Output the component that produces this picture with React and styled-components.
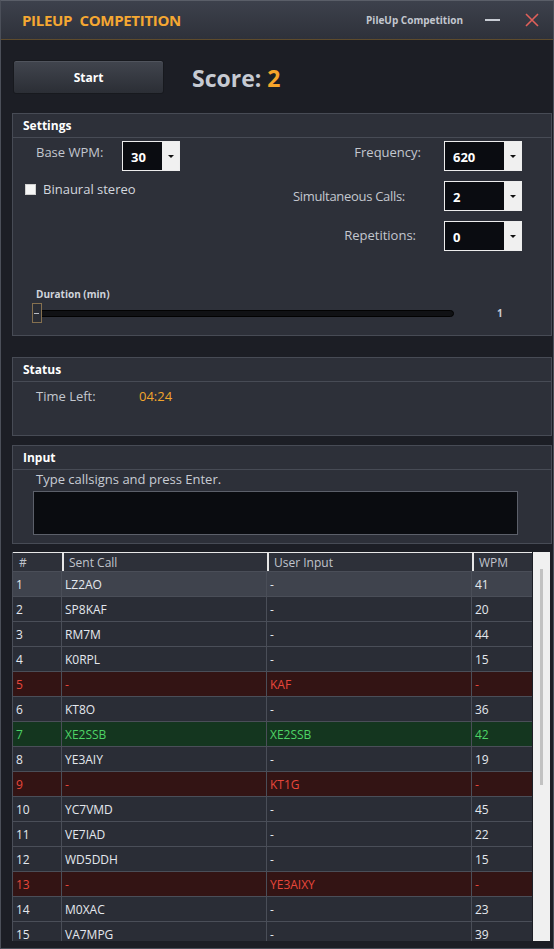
import styled, { createGlobalStyle } from "styled-components";

const GlobalStyle = createGlobalStyle`
  html, body {
    margin: 0;
    padding: 0;
    background: #1c1e25;
  }
  * {
    box-sizing: border-box;
  }
`;

const rows = [
  { n: 1, sent: "LZ2AO", input: "-", wpm: "41", kind: "selected" },
  { n: 2, sent: "SP8KAF", input: "-", wpm: "20" },
  { n: 3, sent: "RM7M", input: "-", wpm: "44" },
  { n: 4, sent: "K0RPL", input: "-", wpm: "15" },
  { n: 5, sent: "-", input: "KAF", wpm: "-", kind: "wrong" },
  { n: 6, sent: "KT8O", input: "-", wpm: "36" },
  { n: 7, sent: "XE2SSB", input: "XE2SSB", wpm: "42", kind: "ok" },
  { n: 8, sent: "YE3AIY", input: "-", wpm: "19" },
  { n: 9, sent: "-", input: "KT1G", wpm: "-", kind: "wrong" },
  { n: 10, sent: "YC7VMD", input: "-", wpm: "45" },
  { n: 11, sent: "VE7IAD", input: "-", wpm: "22" },
  { n: 12, sent: "WD5DDH", input: "-", wpm: "15" },
  { n: 13, sent: "-", input: "YE3AIXY", wpm: "-", kind: "wrong" },
  { n: 14, sent: "M0XAC", input: "-", wpm: "23" },
  { n: 15, sent: "VA7MPG", input: "-", wpm: "39" },
];

const rowBg = {
  selected: "#3f434d",
  wrong: "#331414",
  ok: "#14361f",
};
const rowFg = {
  wrong: "#e8473b",
  ok: "#4ed466",
};

export default function App() {
  return (
    <>
      <GlobalStyle />
      <Window>
        <TitleBar>
          <AppTitle>PILEUP  COMPETITION</AppTitle>
          <Caption>PileUp Competition</Caption>
          <MinButton />
          <CloseButton>
            <svg width="14" height="14" viewBox="0 0 14 14">
              <path d="M1 1 L13 13 M13 1 L1 13" stroke="#e0605a" strokeWidth="1.6" />
            </svg>
          </CloseButton>
        </TitleBar>

        <Main>
          <Toolbar>
            <StartButton>Start</StartButton>
            <Score>
              Score: <ScoreValue>2</ScoreValue>
            </Score>
          </Toolbar>

          <GroupBox $height={223} $mt={19}>
            <GroupHeader>Settings</GroupHeader>
            <SettingsTop>
              <LeftCol>
                <FieldRow>
                  <Label $width={98} $indent={12} $raise={8}>Base WPM:</Label>
                  <Combo $width={58}>
                    <ComboText>30</ComboText>
                    <ComboButton />
                  </Combo>
                </FieldRow>
                <CheckRow>
                  <CheckBox />
                  <CheckLabel>Binaural stereo</CheckLabel>
                </CheckRow>
              </LeftCol>
              <RightCol>
                <FieldRow>
                  <Label $gap={23} $raise={8}>Frequency:</Label>
                  <Combo $width={78}>
                    <ComboText>620</ComboText>
                    <ComboButton />
                  </Combo>
                </FieldRow>
                <FieldRow>
                  <Label $gap={39} $tight>Simultaneous Calls:</Label>
                  <Combo $width={78}>
                    <ComboText>2</ComboText>
                    <ComboButton />
                  </Combo>
                </FieldRow>
                <FieldRow>
                  <Label $gap={28} $raise={2}>Repetitions:</Label>
                  <Combo $width={78}>
                    <ComboText>0</ComboText>
                    <ComboButton />
                  </Combo>
                </FieldRow>
              </RightCol>
            </SettingsTop>
            <DurationLabel>Duration (min)</DurationLabel>
            <SliderRow>
              <SliderTrack>
                <SliderRail />
                <SliderThumb />
              </SliderTrack>
              <SliderValue>1</SliderValue>
            </SliderRow>
          </GroupBox>

          <GroupBox $height={79} $mt={21}>
            <GroupHeader>Status</GroupHeader>
            <StatusRow>
              <StatusLabel>Time Left:</StatusLabel>
              <TimeValue>04:24</TimeValue>
            </StatusRow>
          </GroupBox>

          <GroupBox $height={99} $mt={9}>
            <GroupHeader>Input</GroupHeader>
            <Hint>Type callsigns and press Enter.</Hint>
            <CallInput />
          </GroupBox>

          <TableWrap>
            <Table>
              <HeadRow>
                <HeadCell>#</HeadCell>
                <HeadCell>Sent Call</HeadCell>
                <HeadCell>User Input</HeadCell>
                <HeadCell>WPM</HeadCell>
              </HeadRow>
              {rows.map((r) => (
                <Row key={r.n} $bg={rowBg[r.kind]} $fg={rowFg[r.kind]}>
                  <Cell>{r.n}</Cell>
                  <Cell>{r.sent}</Cell>
                  <Cell>{r.input}</Cell>
                  <Cell>{r.wpm}</Cell>
                </Row>
              ))}
            </Table>
            <ScrollBar>
              <ScrollThumb />
            </ScrollBar>
          </TableWrap>
        </Main>
      </Window>
    </>
  );
}

const font = `"Open Sans", "Noto Sans", sans-serif`;

const Window = styled.div`
  width: 554px;
  height: 949px;
  border: 1px solid #4b4f59;
  border-top-color: #5a5e68;
  background: #1c1e25;
  display: flex;
  flex-direction: column;
  overflow: hidden;
  font-family: ${font};
`;

const TitleBar = styled.div`
  height: 39px;
  flex-shrink: 0;
  display: flex;
  align-items: center;
  padding: 0 14px 0 21px;
  background: linear-gradient(#3d414c, #2e313a);
  border-bottom: 1px solid #5e4b2c;
`;

const AppTitle = styled.div`
  white-space: pre;
  font-size: 15px;
  font-weight: 700;
  color: #f5a832;
  letter-spacing: -0.3px;
  flex: 1;
`;

const Caption = styled.div`
  font-size: 10px;
  font-weight: 700;
  color: #c3c7cf;
  margin-right: 22px;
`;

const MinButton = styled.div`
  width: 15px;
  height: 2px;
  background: #c8ccd4;
  margin-right: 25px;
`;

const CloseButton = styled.div`
  width: 14px;
  height: 14px;
  display: flex;
`;

const Main = styled.div`
  flex: 1;
  min-height: 0;
  display: flex;
  flex-direction: column;
  padding: 20px 1px 7px 11px;
`;

const Toolbar = styled.div`
  height: 34px;
  display: flex;
  align-items: center;
  gap: 28px;
  padding-left: 1px;
  flex-shrink: 0;
`;

const StartButton = styled.button`
  width: 151px;
  height: 34px;
  border: 1px solid #17191e;
  border-radius: 3px;
  background: linear-gradient(#41454e, #2b2e35);
  box-shadow: inset 0 1px 0 #50545d;
  color: #ffffff;
  font-family: ${font};
  font-size: 12px;
  font-weight: 700;
  padding: 0;
`;

const Score = styled.div`
  font-size: 23px;
  font-weight: 700;
  color: #c6cad2;
  margin-top: 1px;
`;

const ScoreValue = styled.span`
  color: #f7a52b;
`;

const GroupBox = styled.div`
  height: ${(p) => p.$height}px;
  margin-top: ${(p) => p.$mt}px;
  flex-shrink: 0;
  border: 1px solid #474b55;
  background: #2d3039;
  display: flex;
  flex-direction: column;
`;

const GroupHeader = styled.div`
  height: 24px;
  flex-shrink: 0;
  display: flex;
  align-items: center;
  padding-left: 10px;
  border-bottom: 1px solid #474b55;
  color: #ffffff;
  font-size: 12px;
  font-weight: 700;
`;

const SettingsTop = styled.div`
  display: flex;
  justify-content: space-between;
  padding: 3px 29px 0 11px;
`;

const LeftCol = styled.div`
  display: flex;
  flex-direction: column;
`;

const RightCol = styled.div`
  display: flex;
  flex-direction: column;
  align-items: flex-end;
  gap: 10px;
`;

const FieldRow = styled.div`
  display: flex;
  align-items: center;
  height: 30px;
`;

const Label = styled.div`
  width: ${(p) => (p.$width ? `${p.$width}px` : "auto")};
  padding-left: ${(p) => p.$indent || 0}px;
  margin-right: ${(p) => p.$gap || 0}px;
  margin-bottom: ${(p) => p.$raise || 0}px;
  letter-spacing: ${(p) => (p.$tight ? "-0.3px" : "0")};
  color: #c3c7cf;
  font-size: 13px;
`;

const Combo = styled.div`
  width: ${(p) => p.$width}px;
  height: 30px;
  display: flex;
  border: 1px solid #ededed;
  background: #0a0c11;
`;

const ComboText = styled.div`
  flex: 1;
  display: flex;
  align-items: center;
  padding-left: 8px;
  padding-top: 2px;
  color: #ffffff;
  font-size: 13px;
  font-weight: 700;
`;

const ComboButton = styled.div`
  width: 17px;
  background: #f0f0f0;
  display: flex;
  align-items: center;
  justify-content: center;
  &::after {
    content: "";
    border-left: 3px solid transparent;
    border-right: 3px solid transparent;
    border-top: 3px solid #111;
  }
`;

const CheckRow = styled.div`
  display: flex;
  align-items: center;
  margin-top: 10px;
  height: 16px;
  padding-left: 1px;
`;

const CheckBox = styled.div`
  width: 11px;
  height: 11px;
  background: #f6f6f6;
  border: 1px solid #d0d0d0;
`;

const CheckLabel = styled.div`
  margin-left: 7px;
  color: #d3d7de;
  font-size: 13px;
`;

const DurationLabel = styled.div`
  margin-top: 37px;
  padding-left: 23px;
  color: #d0d4dc;
  font-size: 10px;
  font-weight: 700;
  line-height: 12px;
`;

const SliderRow = styled.div`
  display: flex;
  align-items: center;
  margin-top: 3px;
  padding-left: 19px;
`;

const SliderTrack = styled.div`
  position: relative;
  width: 422px;
  height: 20px;
  display: flex;
  align-items: center;
`;

const SliderRail = styled.div`
  width: 100%;
  height: 7px;
  margin-left: 2px;
  border-radius: 4px;
  background: #101114;
  border: 1px solid #020202;
`;

const SliderThumb = styled.div`
  position: absolute;
  left: 0;
  top: 0;
  width: 10px;
  height: 20px;
  border: 1px solid #85704f;
  background: #2a2d35;
  &::after {
    content: "";
    position: absolute;
    left: 1px;
    top: 9px;
    width: 5px;
    height: 1px;
    background: #b8bcc4;
  }
`;

const SliderValue = styled.div`
  margin-left: 43px;
  color: #c8ccd4;
  font-size: 10px;
  font-weight: 700;
`;

const StatusRow = styled.div`
  display: flex;
  align-items: center;
  height: 20px;
  margin-top: 4px;
  padding-left: 23px;
  font-size: 13px;
`;

const StatusLabel = styled.div`
  width: 103px;
  color: #c3c7cf;
`;

const TimeValue = styled.div`
  color: #f2a52c;
`;

const Hint = styled.div`
  padding-left: 23px;
  height: 18px;
  line-height: 18px;
  color: #c8ccd4;
  font-size: 13px;
`;

const CallInput = styled.div`
  margin: 3px 0 0 20px;
  width: 485px;
  height: 44px;
  background: #0a0c10;
  border: 1px solid #5c606a;
`;

const TableWrap = styled.div`
  flex: 1;
  min-height: 0;
  margin-top: 8px;
  display: flex;
  overflow: hidden;
`;

const Table = styled.div`
  width: 520px;
  display: flex;
  flex-direction: column;
  border-left: 1px solid #4a4e58;
  background: #2a2d36;
  font-size: 12px;
`;

const columns = `49px 205px 205px 60px`;

const HeadRow = styled.div`
  display: grid;
  grid-template-columns: ${columns};
  height: 20px;
  flex-shrink: 0;
  background: #2d3039;
  border-top: 1px solid #e8e8e8;
  border-bottom: 1px solid #4a4e58;
`;

const HeadCell = styled.div`
  display: flex;
  align-items: center;
  padding-left: 5px;
  color: #c0c4cc;
  border-left: 2px solid #e6e6e6;
  &:first-child {
    border-left: none;
    padding-left: 6px;
  }
`;

const Row = styled.div`
  display: grid;
  grid-template-columns: ${columns};
  height: 25px;
  flex-shrink: 0;
  background: ${(p) => p.$bg || "#2a2d36"};
  color: ${(p) => p.$fg || "#e4e8ee"};
  border-bottom: 1px solid #4a4e58;
`;

const Cell = styled.div`
  display: flex;
  align-items: center;
  padding-left: 3px;
  border-right: 1px solid #4a4e58;
  &:last-child {
    border-right: none;
  }
`;

const ScrollBar = styled.div`
  width: 17px;
  margin-left: 1px;
  background: #f0f0f0;
  display: flex;
  justify-content: center;
  padding-top: 17px;
`;

const ScrollThumb = styled.div`
  width: 3px;
  height: 216px;
  background: #c2c2c2;
`;
